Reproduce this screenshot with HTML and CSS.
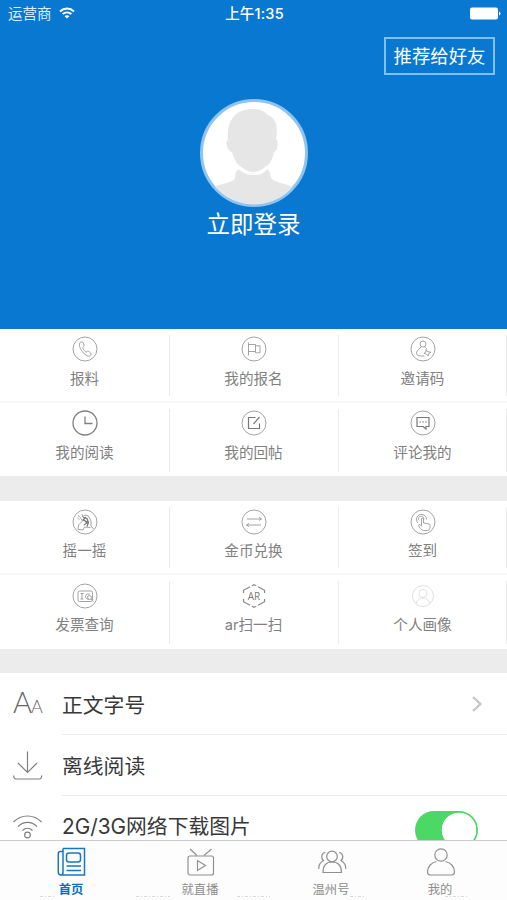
FILE: index.html
```html
<!DOCTYPE html>
<html lang="zh-CN">
<head>
    <meta charset="UTF-8">
    <title>我的</title>
    <link rel="stylesheet" href="styles.css">
</head>
<body>
    <header class="header">
        <div class="status">
            <div class="carrier">
                <span>运营商</span>
                <svg width="16" height="12" viewBox="0 0 16 12" fill="none" stroke="#fff" stroke-width="2">
                    <path d="M1 4.4C5 .6 11 .6 15 4.4M3.6 7.1c2.6-2.3 6.2-2.3 8.8 0"/>
                    <path d="M5.6 9.2c1.5-1.2 3.3-1.2 4.8 0L8 11.6z" fill="#fff" stroke="none"/>
                </svg>
            </div>
            <div class="time">上午1:35</div>
            <div class="battery">
                <svg width="31" height="13" viewBox="0 0 31 13">
                    <rect x="0" y="0.5" width="28" height="12" rx="2"/>
                    <path d="M29 4.5c2 .7 2 3.3 0 4z"/>
                </svg>
            </div>
        </div>
        <a class="share">推荐给好友</a>
        <div class="login">
            <svg class="avatar" width="108" height="108" viewBox="0 0 108 108">
                <defs><clipPath id="face"><circle cx="54" cy="54" r="51.5"/></clipPath></defs>
                <circle cx="54" cy="54" r="52.5" fill="#fff" stroke="#8fc3f0" stroke-width="3"/>
                <g clip-path="url(#face)" fill="#e6e6e6">
                    <path d="M10 90c6-5 18-5 24-9 2-3 0-6 4-11 7 5 10 6 16 6s9-1 13-6c5 3 2 8 6 11 7 4 19 4 27 12l-20 24H25z"/>
                    <path d="M28 41C26 20 37 10 52 10c8 0 12 2 16 6 9 3 10 14 8 24 3 2 2 12-2 13-2 9-5 13-10 17-7 6-14 6-21 0-6-5-9-9-11-17-5-2-7-10-4-12z"/>
                </g>
                <path d="M39 67c10 9 20 9 28 0" fill="none" stroke="#fff" stroke-width="1.5"/>
            </svg>
            <div class="login-text">立即登录</div>
        </div>
    </header>

    <section class="grid">
        <div class="cell">
            <svg class="icon" viewBox="0 0 26 26">
                <circle cx="13" cy="13" r="12"/>
                <path d="M8.5 6.2c-3 2 .5 10.300 6.500 13.500 2 1 3.800.2 4.200-1.600.2-1-2.700-3.200-3.700-2.900l-1.400 1c-1.600-1-3-3-3.300-4.800l1.200-1.200c.5-1-.8-4.200-2-4.300z"/>
            </svg>
            <span>报料</span>
        </div>
        <div class="cell">
            <svg class="icon" viewBox="0 0 26 26">
                <circle cx="13" cy="13" r="12"/>
                <path d="M7.500 6.500v13M7.500 8.500h7v7h-7M14.500 9.800h4.500v7h-4.500v-1.500"/>
            </svg>
            <span>我的报名</span>
        </div>
        <div class="cell">
            <svg class="icon" viewBox="0 0 26 26">
                <circle cx="13" cy="13" r="12"/>
                <circle cx="13" cy="8" r="3"/>
                <path d="M11 10.800c0 1.800-4.500 2.500-4.500 6.500 0 2.500 3 2.800 8 2.700M15 10.800c0 1 1 1.500 2 2.200M16 13.500l1.200 2 3.800.800-2.400 1.400-.6 2.300-1.500-1.800-2.500-.8 2-1.500z"/>
            </svg>
            <span>邀请码</span>
        </div>
        <div class="cell">
            <svg class="icon dark" viewBox="0 0 26 26">
                <circle cx="13" cy="13" r="12"/>
                <path d="M13 6.500v7h7.500"/>
            </svg>
            <span>我的阅读</span>
        </div>
        <div class="cell">
            <svg class="icon" viewBox="0 0 26 26">
                <circle cx="13" cy="13" r="12"/>
                <path class="bold" d="M14.500 7.500H7.500v11h11v-5M12.500 14l6-7"/>
            </svg>
            <span>我的回帖</span>
        </div>
        <div class="cell">
            <svg class="icon" viewBox="0 0 26 26">
                <circle cx="13" cy="13" r="12"/>
                <path class="bold" d="M7 7.500h12v9h-3V19l-3-2.500H7z"/>
                <path class="bold" d="M9.500 12h1.500M12.300 12h1.500M15.200 12h1.500"/>
            </svg>
            <span>评论我的</span>
        </div>
    </section>

    <section class="grid">
        <div class="cell">
            <svg class="icon" viewBox="0 0 26 26">
                <circle cx="13" cy="13" r="12"/>
                <path d="M6 6.500l2.500 2M10 5l.5 3 2.500-2 3.500 1 2.500 5v5l2.500 3M8.500 9l2 3-4 4-.5 4.500 5 .5 1.500-3 6 .5M5.500 9l2 1.500"/>
                <path class="bold" d="M11 8.500l4 1 1.500 4-1.500 4M12 11l3 3-3 2M14 8l-3 3 5 2"/>
            </svg>
            <span>摇一摇</span>
        </div>
        <div class="cell">
            <svg class="icon" viewBox="0 0 26 26">
                <circle cx="13" cy="13" r="12"/>
                <path d="M6 10h14.500l-2.500-2M20.500 10L18 11.500M20 16H5.500L8 14.300M5.500 16L8 17.700"/>
            </svg>
            <span>金币兑换</span>
        </div>
        <div class="cell">
            <svg class="icon" viewBox="0 0 26 26">
                <circle cx="13" cy="13" r="12"/>
                <path d="M8 14c-3.500-4-.5-9 4-8.500 3 .3 4.500 2.500 4.500 5M9 11.500C7.500 9 9.500 7 11.500 7.300c1.500.2 2.500 1.500 2.500 3"/>
                <path d="M11.500 17V10c0-1.500 2-1.500 2 0v4l5.500 1c1.500.300 1.800 6-1.500 6.500h-4c-2 0-4.500-3.500-5-5 .3-1.500 2-.8 3 .5"/>
            </svg>
            <span>签到</span>
        </div>
        <div class="cell">
            <svg class="icon" viewBox="0 0 26 26">
                <circle cx="13" cy="13" r="12"/>
                <rect x="6" y="8" width="14.500" height="10.500" rx="1.500"/>
                <path d="M8.500 10.500h3M10 10.500v5.500M8.500 16h3"/>
                <path d="M18 11h-3c-2 1-2 4 0 5h2"/>
                <circle cx="17.500" cy="14.500" r="2"/><path d="M19 16l2.500 2.500"/>
            </svg>
            <span>发票查询</span>
        </div>
        <div class="cell">
            <svg class="icon hex" viewBox="0 0 26 26">
                <path d="M2.500 10V7.300L9 3.800M11 2.700l2-1 2 1M17 3.800l6.500 3.500V10M23.500 16v2.700L17 22.200M15 23.300l-2 1-2-1M9 22.200l-6.500-3.500V16"/>
                <text class="ar" x="13" y="17" text-anchor="middle">AR</text>
            </svg>
            <span>ar扫一扫</span>
        </div>
        <div class="cell">
            <svg class="icon light" viewBox="0 0 26 26">
                <circle cx="13" cy="13" r="10.500"/>
                <circle cx="13" cy="10.500" r="4"/>
                <path d="M6 20.500c1.500-4 4-5.500 7-5.500s5.500 1.500 7 5.500"/>
            </svg>
            <span>个人画像</span>
        </div>
    </section>

    <main class="list">
        <div class="row">
            <div class="font-icon"><span>A</span><span class="small">A</span></div>
            <div class="label">正文字号</div>
            <svg class="arrow" width="12" height="18" viewBox="0 0 12 18"><path d="M2 2l7.500 7L2 16"/></svg>
        </div>
        <div class="row">
            <svg class="row-icon" viewBox="0 0 30 32">
                <path d="M14.500 1.500V22M5 13l9.500 9.500L24 13M.7 25.500c0 2.500.5 3.500 2.500 3.500h23c2 0 2.500-1 2.500-3.500"/>
            </svg>
            <div class="label">离线阅读</div>
        </div>
        <div class="row">
            <svg class="row-icon" viewBox="0 0 30 32">
                <path d="M.5 11c8-8 20-8 28 0M5 15.500c5.500-5.500 13.500-5.500 19 0M9.500 19.500c3-3 7-3 10 0"/>
                <circle cx="14.500" cy="24" r="2.800"/>
            </svg>
            <div class="label">2G/3G网络下载图片</div>
            <div class="switch"></div>
        </div>
    </main>

    <nav class="tabs">
        <div class="tab active">
            <svg viewBox="0 0 30 30">
                <path d="M6 1.500h21.500V28H4c-2 0-2.700-1-2.700-3V6.500c0-1.500.7-2 2-2H6M6 1.500V25c0 2-1 3-2 3"/>
                <rect x="9.500" y="6" width="14" height="9" rx="2.500"/>
                <path d="M9.500 19h14.500M9.500 23.500h14.500"/>
            </svg>
            <span>首页</span>
        </div>
        <div class="tab">
            <svg viewBox="0 0 30 30">
                <rect x="2" y="9" width="25.500" height="19" rx="2"/>
                <path d="M4 2l7 6.500M25.500 2L18 8.500M11.500 13.500v10l8-5z"/>
            </svg>
            <span>就直播</span>
        </div>
        <div class="tab">
            <svg viewBox="0 0 30 30">
                <circle cx="15" cy="9.500" r="5.300"/>
                <path d="M6 25.500c0-7 3-10.500 9-10.500s9.500 3.500 9.500 10.500zM8.500 5.500c-4 0-5 5.500-2 8-3.500 2-5 4.500-4.800 8.500M22 5.500c4 0 5 5.500 2 8 3.500 2 5 4.500 4.800 8.500"/>
            </svg>
            <span>温州号</span>
        </div>
        <div class="tab">
            <svg viewBox="0 0 30 30">
                <circle cx="15" cy="8" r="6.200"/>
                <path d="M10.500 14.500C5 15.500 1.500 20 1.500 25c0 2 1 3 3 3h21c2 0 3-1 3-3 0-5-3.500-9.500-9-10.500"/>
            </svg>
            <span>我的</span>
        </div>
        <svg class="specks" width="507" height="3" viewBox="0 0 507 3">
            <path d="M40 1.500h15M136 1.500h34M237 1.500h33M350 1.500h16M445 1.500h22"/>
        </svg>
    </nav>
</body>
</html>
```
FILE: styles.css
```css
* { box-sizing: border-box; }
body { margin: 0; height: 900px; overflow: hidden; display: flex; flex-direction: column; font-family: Inter, "Noto Sans CJK SC", sans-serif; background-color: #ececec; }
svg { display: block; fill: none; }

/* header */
.header { height: 329px; flex: none; background-color: #0978d0; color: white; display: flex; flex-direction: column; }
.status { display: grid; grid-template-columns: 1fr auto 1fr; height: 28px; padding: 0 6px 1px 8px; align-items: center; font-size: 14.5px; line-height: 22px; }
.carrier { display: flex; align-items: center; gap: 7px; color: #dceeff; }
.carrier svg { margin-top: -2px; }
.time { font-weight: 500; font-size: 14.5px; letter-spacing: 0.2px; }
.battery { display: flex; justify-content: flex-end; }
.battery svg { fill: white; }
.share { align-self: flex-end; width: 111px; height: 38px; margin: 9px 12px 0 0; border: 2px solid #80c0f4; font-size: 18.4px; line-height: 35px; text-align: center; }
.login { display: flex; flex-direction: column; align-items: center; margin-top: 24px; }
.login-text { font-size: 23.5px; line-height: 34px; margin-top: 1px; }

/* shortcuts */
.grid { flex: none; display: grid; grid-template-columns: repeat(3, 169px); grid-auto-rows: 74px; height: 147px; margin-bottom: 25px; background-color: white; overflow: hidden; }
.grid + .grid { height: 148px; margin-bottom: 24px; }
.cell { position: relative; display: flex; flex-direction: column; align-items: center; padding-top: 7px; font-size: 14.6px; line-height: 22px; color: #808080; }
.cell span { margin-top: 6px; }
.cell::after { content: ""; position: absolute; right: -1px; top: 6px; bottom: 5px; width: 1px; background-color: #ebebeb; }
.cell:nth-child(3n)::after { right: 0; }
.cell:nth-child(-n+3) { border-bottom: 2px solid #f7f7f7; }
.icon { width: 26px; height: 26px; stroke: #999; stroke-width: 0.9; }
.grid + .grid .icon { margin-top: 1px; margin-bottom: -1px; }
.icon .bold { stroke: #777; stroke-width: 1.2; }
.icon.dark { stroke: #808080; stroke-width: 1.3; }
.icon.light { stroke: #ddd; }
.icon.hex { stroke: #888; stroke-width: 1.2; }
.ar { font: 10px "Open Sans", sans-serif; fill: #777; stroke: none; }

/* settings */
.list { flex: none; height: 167px; background-color: white; overflow: hidden; }
.row { display: flex; align-items: center; height: 61px; padding-left: 13px; background: linear-gradient(#ececec, #ececec) 62px 100% / 100% 1px no-repeat; }
.row:first-child { height: 62px; }
.row-icon { width: 30px; height: 32px; stroke: #808080; stroke-width: 1.2; }
.font-icon { display: flex; align-items: baseline; width: 30px; font: 300 29px/40px Lato, sans-serif; color: #666; }
.font-icon .small { font-size: 18px; margin-left: -1px; }
.label { flex: 1; height: 61px; margin-left: 19px; line-height: 63px; font-size: 20.8px; color: #383838; }
.row:last-child .label { line-height: 61px; }
.arrow { margin-right: 24px; stroke: #c4c4c8; stroke-width: 2.2; }
.switch { width: 63px; height: 38px; margin: 6px 29px 0 0; border-radius: 19px; background: radial-gradient(circle at 44px 19px, white 17px, #4cd864 17.600px); }

/* tab bar */
.tabs { position: relative; flex: none; height: 60px; border-top: 1px solid #ccc; background-color: #fdfdfd; display: grid; grid-template-columns: 136px 122px 140px 78px; justify-content: start; padding-left: 3px; }
.tab { display: flex; flex-direction: column; align-items: center; padding-top: 6px; font-size: 12.3px; line-height: 18px; color: #8c8c8c; }
.tab svg { width: 30px; height: 30px; margin-left: 1px; stroke: #909090; stroke-width: 1.2; }
.tab span { margin-top: 4px; }
.tab.active { color: #0c70c0; font-weight: 700; }
.tab.active svg { stroke: #1877c0; stroke-width: 1.500; }
.specks { position: absolute; left: 0; bottom: 2px; stroke: #d8d8d8; stroke-dasharray: 3 2 1 2; }
```
